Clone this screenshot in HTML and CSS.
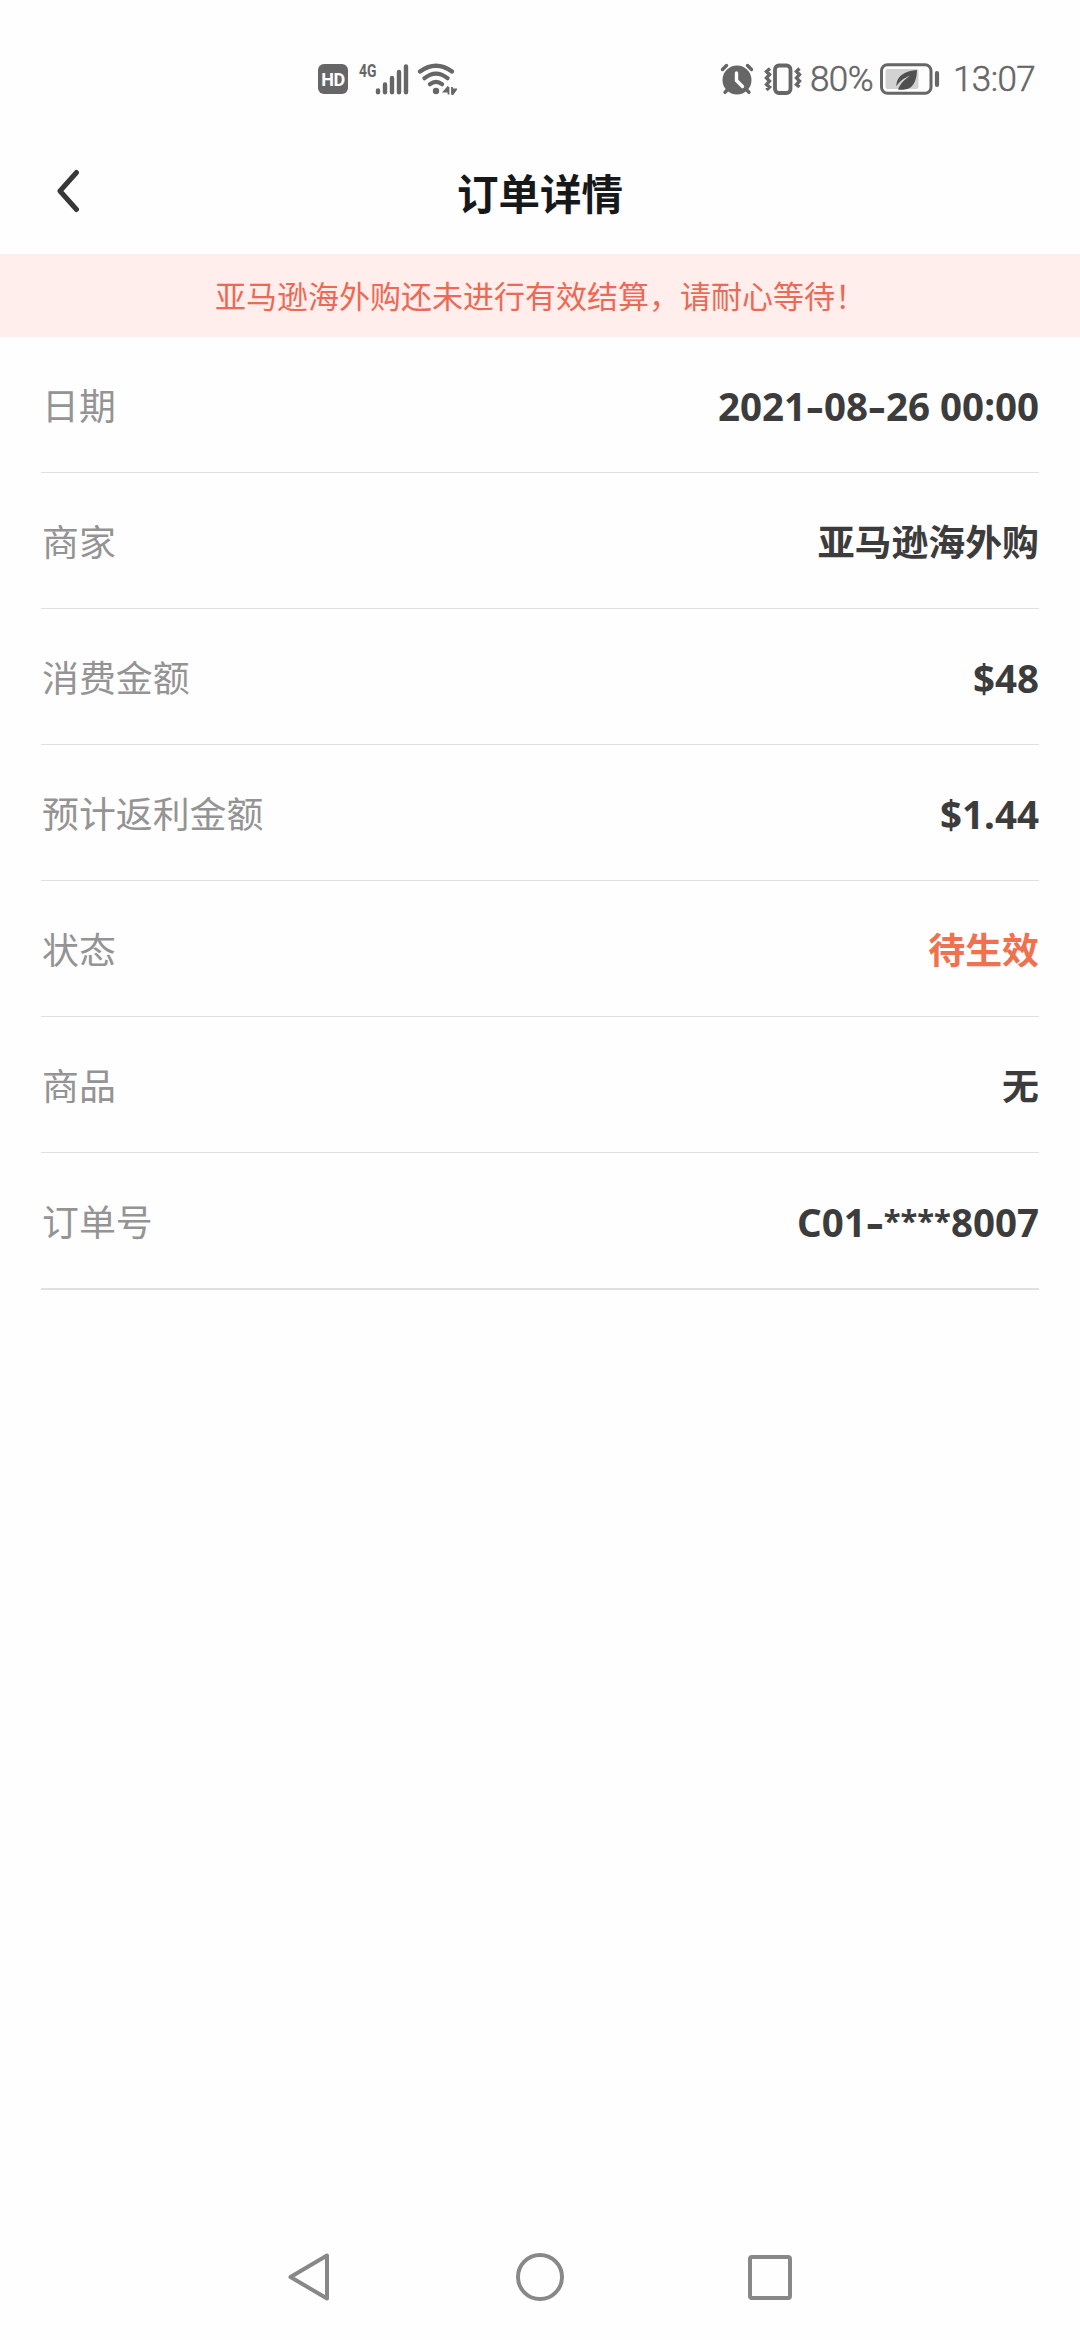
FILE: index.html
```html
<!DOCTYPE html>
<html lang="zh-CN">
<head>
    <meta charset="UTF-8">
    <meta name="viewport" content="width=device-width, initial-scale=1.0">
    <title>订单详情</title>
    <link rel="stylesheet" href="styles.css">
</head>
<body>
    <!-- 状态栏 -->
    <div class="status-bar">
        <div class="status-left">
            <span class="hd">HD</span>
            <span class="network">4G</span>
            <svg class="signal" width="34" height="32" viewBox="0 0 34 32" stroke="#666" stroke-width="4.4" stroke-linecap="round">
                <path d="M3 27.5v1.8M10 21.5v7.8M17 15v14.3M24 9v20.3M31 3.5v25.8"/>
            </svg>
            <svg class="wifi" width="40" height="32" viewBox="0 0 40 32" fill="none" stroke="#666" stroke-width="4.2" stroke-linecap="round">
                <path d="M3 8.5Q19 -3 35 8.5M7.5 15.2Q19 6 30.5 15.2M13 21.2Q19 16.5 25 21.2"/>
                <circle cx="19" cy="28" r="3.2" fill="#666" stroke="none"/>
                <path d="M31.5 24v7.5M27 28.5h4l-0.5-4zM35 24v7.5M35.5 26.5h3.5l-3.5 5z" fill="#666" stroke-width="1.8" stroke-linecap="butt"/>
            </svg>
        </div>
        <div class="status-right">
            <svg class="alarm" width="34" height="32" viewBox="0 0 34 32" fill="none" stroke="#666" stroke-linecap="round">
                <circle cx="17" cy="17" r="14.5" fill="#666" stroke="none"/>
                <path d="M2.5 6.5l4-4M31.5 6.5l-4-4M5 29.3l2-2M29 29.3l-2-2" stroke-width="3.4"/>
                <path d="M16.5 10v7.5l6 6" stroke="#fefefe" stroke-width="3.4"/>
            </svg>
            <svg class="vibrate" width="38" height="32" viewBox="0 0 38 32" fill="none" stroke="#666" stroke-width="3.4">
                <rect x="11" y="2.5" width="15.5" height="27.5" rx="4" stroke-width="3.8"/>
                <path d="M6 5.5l-3.5 3 3 3-3 3.5 3 3-3 3.5 3 2.500-3 3M35.5 5.500l-3 3 3 3-3 3.500 3 3-3 3.500 3 2.500"/>
            </svg>
            <span class="percent">80%</span>
            <svg class="battery" width="60" height="32" viewBox="0 0 60 32" fill="none">
                <rect x="1.5" y="1.7" width="49.5" height="28.6" rx="6" stroke="#666" stroke-width="3"/>
                <rect x="5.5" y="6" width="33" height="20" rx="2" fill="#d2d2d2"/>
                <path d="M37 7C27 7.5 16 12 16.5 23.5C19 18 24 15.5 30 12.5C25 16.5 20.5 20 18 26.5C33 28.5 36.5 19 37 7z" fill="#505050"/>
                <path d="M57 10v12" stroke="#666" stroke-width="4.2" stroke-linecap="round"/>
            </svg>
            <span class="time">13:07</span>
        </div>
    </div>

    <!-- 标题栏 -->
    <header class="header">
        <a class="back" href="#" aria-label="返回">
            <svg width="26" height="44" viewBox="0 0 26 44" fill="none" stroke="#38383a" stroke-width="5" stroke-linecap="round" stroke-linejoin="round">
                <path d="M22.5 3.5L6 22L22.5 40.5"/>
            </svg>
        </a>
        <h1>订单详情</h1>
    </header>

    <div class="notice">亚马逊海外购还未进行有效结算，请耐心等待！</div>

    <!-- 订单信息 -->
    <ul class="order-list">
        <li><span class="label">日期</span><span class="value number">2021<span class="dash">-</span>08<span class="dash">-</span>26 00:00</span></li>
        <li><span class="label">商家</span><span class="value">亚马逊海外购</span></li>
        <li><span class="label">消费金额</span><span class="value number">$48</span></li>
        <li><span class="label">预计返利金额</span><span class="value number">$1.44</span></li>
        <li><span class="label">状态</span><span class="value pending">待生效</span></li>
        <li><span class="label">商品</span><span class="value">无</span></li>
        <li><span class="label">订单号</span><span class="value number">C01<span class="dash">-</span><span class="mask">****</span>8007</span></li>
    </ul>

    <!-- 系统导航 -->
    <nav class="nav-bar">
        <svg width="50" height="50" viewBox="0 0 50 50"><path d="M43 3.5V46.5L6.5 25z"/></svg>
        <svg width="50" height="50" viewBox="0 0 50 50"><circle cx="25" cy="25" r="22"/></svg>
        <svg width="50" height="50" viewBox="0 0 50 50"><rect x="4" y="5" width="40" height="41" rx="2"/></svg>
    </nav>
</body>
</html>
```
FILE: styles.css
```css
* {
    box-sizing: border-box;
}

body {
    margin: 0;
    height: 2340px;
    display: flex;
    flex-direction: column;
    background-color: #fefefe;
    color: #3c3c3c;
    font-family: "Noto Sans CJK SC", sans-serif;
}

svg {
    display: block;
    flex: none;
}

/* 状态栏 */
.status-bar {
    height: 132px;
    padding: 25px 42px 0 318px;
    display: flex;
    justify-content: space-between;
    align-items: center;
    color: #666;
}

.status-left,
.status-right {
    display: flex;
    align-items: center;
}

.hd {
    width: 30px;
    height: 30px;
    border-radius: 6px;
    background-color: #666;
    color: #fefefe;
    font: bold 18px/31px "Roboto", sans-serif;
    text-align: center;
    letter-spacing: -0.5px;
}

.network {
    width: 24px;
    margin: 0 -8px 16px 11px;
    font: bold 19px/20px "Roboto", sans-serif;
    transform: scaleX(0.73);
    transform-origin: left;
}

.wifi {
    margin-left: 8px;
}

.vibrate {
    margin-left: 10px;
}

.percent,
.time {
    padding-top: 2px;
    font: 300 35px/40px "Roboto", sans-serif;
    -webkit-text-stroke: 0.5px #666;
    white-space: nowrap;
    letter-spacing: -0.6px;
}

.percent {
    width: 70px;
    margin-left: 8px;
}

.time {
    width: 85px;
    margin-left: 13px;
}

/* 标题栏 */
.header {
    height: 122px;
    padding: 0 54px;
    display: grid;
    grid-template-columns: 26px 1fr 26px;
    align-items: center;
}

.back {
    padding-bottom: 4px;
}

.header h1 {
    margin: 0;
    padding-bottom: 3px;
    font-size: 41.5px;
    line-height: 60px;
    font-weight: bold;
    text-align: center;
    color: #17181a;
}

.notice {
    height: 83px;
    padding-left: 1px;
    line-height: 82px;
    background-color: #ffeeec;
    color: #ec6a55;
    font-size: 31px;
    text-align: center;
}

/* 订单信息 */
.order-list {
    margin: 0;
    padding: 0 41px;
    list-style: none;
}

.order-list li {
    height: 136px;
    padding: 0 0 2px 1px;
    display: flex;
    justify-content: space-between;
    align-items: center;
    border-bottom: 1px solid #e0e0e0;
    font-size: 36.9px;
}

.order-list li:last-child {
    height: 137px;
    border-bottom-width: 2px;
}

.label {
    color: #949494;
}

.value {
    font-weight: bold;
}

.number {
    padding-top: 4px;
    font-family: "Noto Sans", "Noto Sans CJK SC", sans-serif;
    font-size: 38.5px;
}

.dash {
    display: inline-block;
    width: 18px;
    text-align: center;
    transform: scaleX(1.4);
}

.mask {
    font-size: 31px;
    line-height: 0;
    vertical-align: 5px;
}

.pending {
    color: #f0714f;
}

/* 系统导航 */
.nav-bar {
    margin-top: auto;
    height: 126px;
    padding: 0 284px;
    display: flex;
    justify-content: space-between;
    align-items: center;
    fill: none;
    stroke: #888;
    stroke-width: 4;
    stroke-linejoin: round;
}
```
